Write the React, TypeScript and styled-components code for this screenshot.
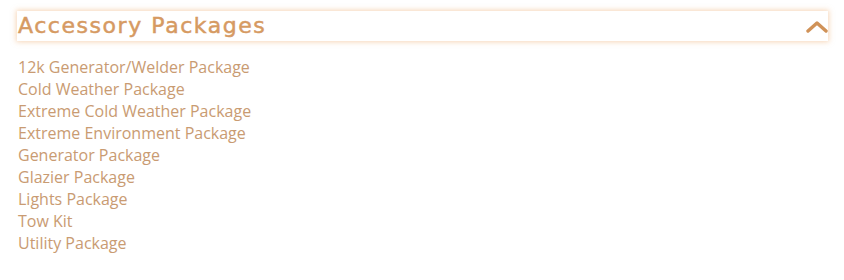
import React from "react";
import styled, { createGlobalStyle } from "styled-components";

const Global = createGlobalStyle`
  html, body { margin: 0; padding: 0; background: #ffffff; }
  body { font-family: "Open Sans", "Liberation Sans", sans-serif; }
`;

const Page = styled.div`
  padding: 11px 16px 0 17px;
  width: 844px;
  box-sizing: border-box;
`;

const Header = styled.button`
  display: flex;
  align-items: center;
  justify-content: space-between;
  width: 811px;
  height: 30px;
  padding: 0 0 0 1px;
  margin: 0;
  border: none;
  background: #ffffff;
  box-shadow: 0 0 5px 1px rgba(240, 175, 115, 0.5);
  cursor: pointer;
`;

const Title = styled.span`
  font-family: "DejaVu Sans", "Noto Sans", sans-serif;
  font-weight: 400;
  font-size: 22px;
  letter-spacing: 1.55px;
  -webkit-text-stroke: 0.5px #d69a62;
  color: #d69a62;
  line-height: 30px;
`;

const Chevron = styled.svg`
  width: 22px;
  height: 14px;
`;

const List = styled.ul`
  list-style: none;
  margin: 0;
  padding: 15px 0 0 1px;
`;

const Item = styled.li`
  font-size: 16px;
  line-height: 22px;
  color: #c99b72;
`;

const items = [
  "12k Generator/Welder Package",
  "Cold Weather Package",
  "Extreme Cold Weather Package",
  "Extreme Environment Package",
  "Generator Package",
  "Glazier Package",
  "Lights Package",
  "Tow Kit",
  "Utility Package",
];

export default function App() {
  return (
    <>
      <Global />
      <Page>
        <Header>
          <Title>Accessory Packages</Title>
          <Chevron viewBox="0 0 22 14">
            <polyline
              points="2,12 11,4 20,12"
              fill="none"
              stroke="#d09258"
              strokeWidth="3.4"
              strokeLinecap="round"
              strokeLinejoin="round"
            />
          </Chevron>
        </Header>
        <List>
          {items.map((t) => (
            <Item key={t}>{t}</Item>
          ))}
        </List>
      </Page>
    </>
  );
}
